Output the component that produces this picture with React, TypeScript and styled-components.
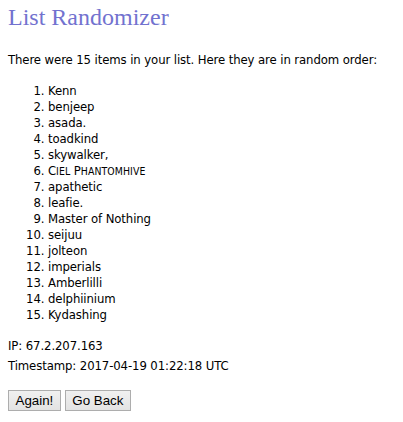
import React from "react";
import styled, { createGlobalStyle } from "styled-components";

const Global = createGlobalStyle`
  html, body { margin: 0; padding: 0; background: #fff; }
  body {
    padding: 8px;
    font-family: "DejaVu Sans", Tahoma, Verdana, sans-serif;
    font-stretch: condensed;
    font-size: 13px;
    letter-spacing: -0.1px;
    line-height: 16px;
    color: #000;
  }
`;

const Title = styled.h1`
  margin: 0;
  font-family: "Liberation Serif", Georgia, serif;
  font-stretch: normal;
  letter-spacing: 0;
  font-weight: normal;
  font-size: 24px;
  line-height: 18px;
  color: #7272cf;
`;

const Intro = styled.p`
  margin: 26px 0 0 0;
  white-space: nowrap;
`;

const List = styled.ol`
  margin: 15px 0 0 0;
  padding-left: 40px;
`;

const Item = styled.li``;

const Small = styled.span`
  font-size: 10.4px;
  text-transform: uppercase;
  letter-spacing: 0.1px;
`;

const Meta = styled.p<{ $gap: number }>`
  margin: ${(p) => p.$gap}px 0 0 0;
`;

const Buttons = styled.div`
  display: flex;
  gap: 4px;
  margin-top: 16px;
`;

const Button = styled.button`
  font-family: "Liberation Sans", Arial, sans-serif;
  font-stretch: normal;
  letter-spacing: 0;
  font-size: 13.333px;
  height: 21px;
  padding: 0 6.5px;
  border: 1px solid #adadad;
  border-radius: 0;
  background: linear-gradient(#f0f0f0, #e3e3e3);
  color: #000;
`;

const items = [
  "Kenn",
  "benjeep",
  "asada.",
  "toadkind",
  "skywalker,",
  "Ciel Phantomhive",
  "apathetic",
  "leafie.",
  "Master of Nothing",
  "seijuu",
  "jolteon",
  "imperials",
  "Amberlilli",
  "delphiinium",
  "Kydashing",
];

function SmallCaps({ text }: { text: string }) {
  const parts = text.match(/[A-Z ]+|[^A-Z ]+/g) || [];
  return (
    <>
      {parts.map((p, i) =>
        /^[A-Z ]+$/.test(p) ? <span key={i}>{p}</span> : <Small key={i}>{p}</Small>
      )}
    </>
  );
}

export default function App() {
  return (
    <>
      <Global />
      <Title>List Randomizer</Title>
      <Intro>There were 15 items in your list. Here they are in random order:</Intro>
      <List>
        {items.map((t, i) => (
          <Item key={i}>{i === 5 ? <SmallCaps text={t} /> : t}</Item>
        ))}
      </List>
      <Meta $gap={15}>IP: 67.2.207.163</Meta>
      <Meta $gap={4}>Timestamp: 2017-04-19 01:22:18 UTC</Meta>
      <Buttons>
        <Button>Again!</Button>
        <Button>Go Back</Button>
      </Buttons>
    </>
  );
}
